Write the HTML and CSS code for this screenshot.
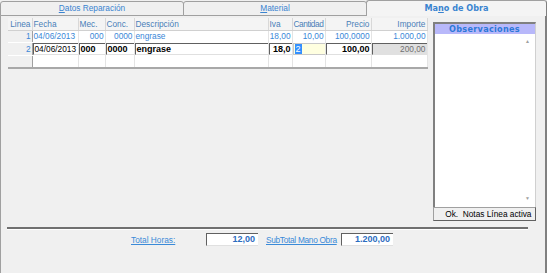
FILE: index.html
```html
<!DOCTYPE html>
<html lang="es">
<head>
<meta charset="UTF-8">
<title>Mano de Obra</title>
<link rel="stylesheet" href="styles.css">
</head>
<body>
<div class="ventana">
    <div class="pestanas">
        <div class="pestana"><u>D</u>atos Reparación</div>
        <div class="pestana"><u>M</u>aterial</div>
        <div class="pestana activa">Ma<u>n</u>o de Obra</div>
    </div>
    <div class="panel">
        <div class="zona">
            <table class="rejilla">
                <colgroup>
                    <col style="width:24px"><col style="width:46px"><col style="width:27px">
                    <col style="width:29px"><col style="width:134px"><col style="width:24px">
                    <col style="width:33px"><col style="width:46px"><col style="width:56px">
                </colgroup>
                <tr class="cabecera">
                    <th>Linea</th><th class="izq">Fecha</th><th class="izq">Mec.</th><th class="izq">Conc.</th>
                    <th class="izq">Descripción</th><th class="izq">Iva</th><th class="izq estrecho">Cantidad</th><th>Precio</th><th>Importe</th>
                </tr>
                <tr class="fila">
                    <td class="num">1</td><td>04/06/2013</td><td class="der">000</td><td class="der">0000</td>
                    <td>engrase</td><td class="der">18,00</td><td class="der">10,00</td><td class="der">100,0000</td><td class="der">1.000,00</td>
                </tr>
                <tr class="fila editando">
                    <td class="num">2</td>
                    <td><span class="caja normal">04/06/2013</span></td>
                    <td><span class="caja">000</span></td>
                    <td><span class="caja">0000</span></td>
                    <td><span class="caja">engrase</span></td>
                    <td><span class="caja der">18,0</span></td>
                    <td><span class="caja amarilla"><span class="sel">2</span></span></td>
                    <td><span class="caja der">100,00</span></td>
                    <td><span class="caja der gris">200,00</span></td>
                </tr>
                <tr class="fila vacia">
                    <td class="num"></td><td></td><td></td><td></td><td></td><td></td><td></td><td></td><td></td>
                </tr>
            </table>
            <div class="notas">
                <div class="obs">
                    <div class="obs-titulo">Observaciones</div>
                    <div class="obs-cuerpo">
                        <div class="texto"></div>
                        <div class="barra">
                            <span class="flecha">&#9650;</span>
                            <span class="flecha">&#9660;</span>
                        </div>
                    </div>
                </div>
                <button class="boton">Ok.&nbsp;&nbsp;Notas Línea activa</button>
            </div>
        </div>
        <div class="separador"></div>
        <div class="totales">
            <a class="enlace horas">Total Horas:</a>
            <span class="total t1">12,00</span>
            <a class="enlace sub">SubTotal Mano Obra</a>
            <span class="total">1.200,00</span>
        </div>
    </div>
</div>
</body>
</html>
```

FILE: styles.css
```css
body {
    margin: 0;
    background-color: #f0f0f0;
    font-family: "Liberation Sans", Arial, sans-serif;
    font-size: 8.3px;
    color: #000;
}
.ventana {
    width: 547px;
    height: 273px;
    overflow: hidden;
}
.pestanas {
    display: flex;
    height: 15px;
}
.pestana {
    flex: 0 0 182px;
    margin-top: 1px;
    height: 13px;
    line-height: 13px;
    text-align: center;
    color: #3a84d0;
    background-color: #f0f0f0;
    border: 1px solid #a0a0a0;
    border-radius: 3px 3px 0 0;
    margin-right: -1px;
}
.pestana.activa {
    flex: 1;
    margin-top: 0;
    height: 15px;
    line-height: 15px;
    font-weight: bold;
    font-size: 9px;
    font-family: "DejaVu Sans Condensed", "Liberation Sans", sans-serif;
    border-bottom: none;
    background-color: #f4f4f4;
    margin-right: 0;
    border-right-color: #808080;
}
.panel {
    height: 255px;
    border: 1px solid #a0a0a0;
    border-top: none;
    border-right: 2px solid #808080;
    border-bottom: 2px solid #808080;
    padding: 3px 0 0 7px;
}
.zona {
    display: flex;
    gap: 5px;
    height: 203px;
}
.rejilla {
    border-collapse: collapse;
    table-layout: fixed;
    width: 419px;
    height: 48px;
    background-color: #fff;
    border-bottom: 2px solid #a8a8a8;
}
.rejilla th, .rejilla td {
    padding: 0 1px;
    height: 11px;
    line-height: 11px;
    border-right: 1px solid #e4e4e4;
    white-space: nowrap;
    overflow: hidden;
}
.cabecera th {
    font-weight: normal;
    color: #4a7fb8;
    text-align: right;
    background-color: #f4f4f4;
    border-right: 1px solid #d8d8d8;
    border-bottom: 1px solid #d0d0d0;
    height: 12px;
}
.cabecera th.izq {
    text-align: left;
}
.cabecera th.estrecho {
    letter-spacing: -0.4px;
}
.fila td {
    color: #3a88d8;
}
.fila td.num {
    background-color: #f0f0f0;
    text-align: right;
    border-right: 1px solid #a0a0a0;
    border-bottom: 1px solid #fff;
}
.der {
    text-align: right;
}
.editando td {
    padding: 0;
    height: 12px;
}
.editando td.num {
    padding: 0 1px;
}
.caja {
    display: block;
    height: 10px;
    line-height: 10px;
    padding: 0 1px;
    border-top: 1px solid #606060;
    border-left: 1px solid #606060;
    border-bottom: 1px solid #e0e0e0;
    font-weight: bold;
    font-size: 9px;
    color: #000;
    background-color: #fff;
}
.caja.normal {
    font-weight: normal;
    font-size: 8.3px;
}
.caja.amarilla {
    background-color: #ffffe0;
    border-color: #c8c8c8;
}
.sel {
    background-color: #3390ff;
    color: #fff;
    font-weight: normal;
    padding: 0 1px;
}
.caja.gris {
    background-color: #e0e0e0;
    color: #707070;
    font-weight: normal;
    font-size: 8.3px;
}
.notas {
    display: flex;
    flex-direction: column;
    width: 103px;
    padding-top: 4px;
}
.obs {
    flex: 1;
    border-top: 2px solid #808080;
    border-left: 2px solid #808080;
    border-right: 1px solid #d0d0d0;
    background-color: #fff;
    display: flex;
    flex-direction: column;
}
.obs-titulo {
    background-color: #b8b8fa;
    color: #2c78d8;
    font-weight: bold;
    font-size: 9px;
    letter-spacing: 0.3px;
    font-family: "DejaVu Sans Condensed", "Liberation Sans", sans-serif;
    text-align: center;
    height: 10px;
    line-height: 10px;
}
.obs-cuerpo {
    flex: 1;
    display: flex;
}
.texto {
    flex: 1;
}
.barra {
    width: 14px;
    display: flex;
    flex-direction: column;
    justify-content: space-between;
    align-items: center;
    padding: 4px 0 6px;
}
.flecha {
    font-size: 5px;
    color: #a0a0a0;
}
.boton {
    height: 14px;
    margin: 0;
    padding: 0 3px 0 0;
    text-align: right;
    font-family: "Liberation Sans", Arial, sans-serif;
    font-size: 8.3px;
    white-space: nowrap;
    background-color: #f0f0f0;
    border: 1px solid #a0a0a0;
    border-right-color: #606060;
    border-bottom-color: #606060;
    color: #000;
}
.separador {
    width: 521px;
    margin: 6px 0 0 -1px;
    border-top: 2px solid #707070;
    border-bottom: 1px solid #fff;
}
.totales {
    display: flex;
    align-items: center;
    margin-top: 3px;
    height: 13px;
}
.enlace {
    color: #3a8ad8;
    text-decoration: underline;
    white-space: nowrap;
}
.enlace.horas {
    margin-left: 123px;
    width: 75px;
}
.enlace.sub {
    width: 70px;
    margin-right: 5px;
    letter-spacing: -0.3px;
}
.total {
    display: block;
    width: 48px;
    height: 11px;
    line-height: 11px;
    padding-right: 3px;
    text-align: right;
    background-color: #fff;
    border-top: 1px solid #606060;
    border-left: 1px solid #606060;
    border-bottom: 1px solid #e0e0e0;
    color: #2c6cc0;
    font-weight: bold;
    font-size: 9px;
}
.total.t1 {
    margin-right: 8px;
}
```
